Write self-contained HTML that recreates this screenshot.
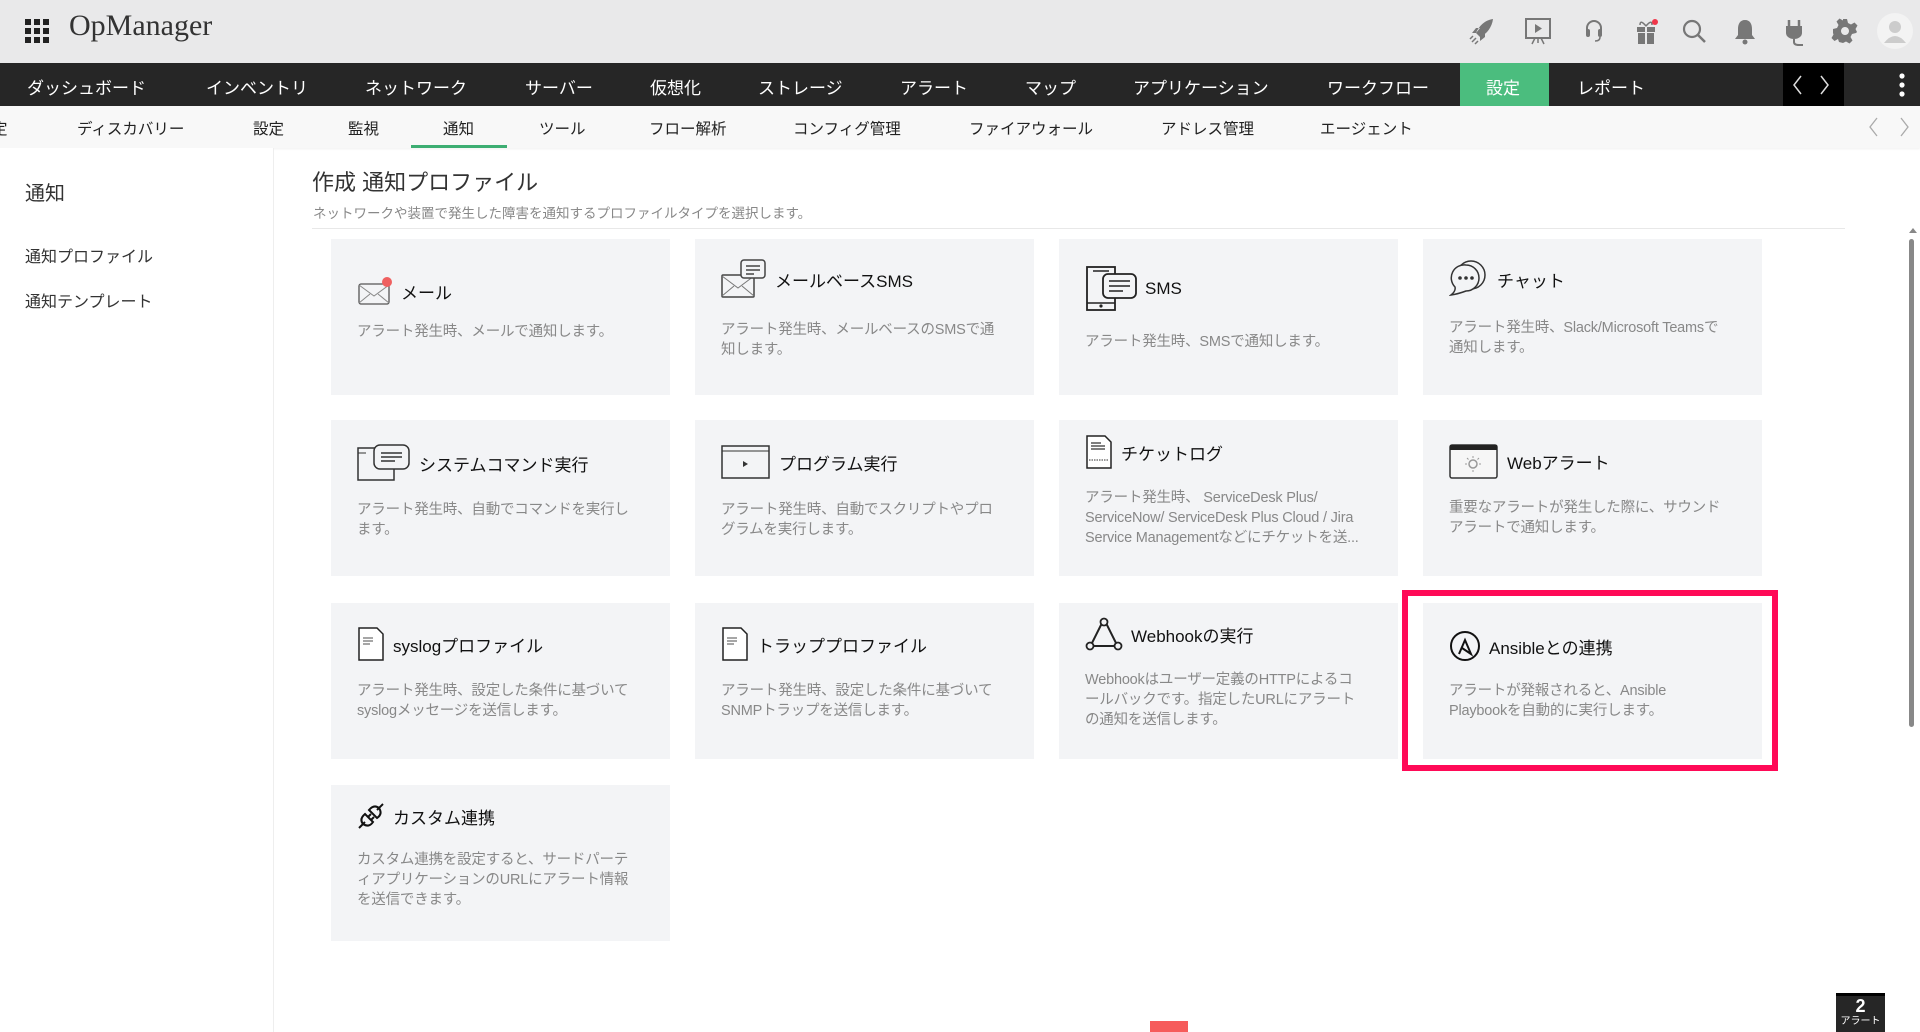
<!DOCTYPE html>
<html><head><meta charset="utf-8">
<style>
*{margin:0;padding:0;box-sizing:border-box}
body{width:1920px;height:1032px;overflow:hidden;background:#fff;font-family:"Liberation Sans","Noto Sans CJK JP",sans-serif;position:relative;color:#222}
.top{position:absolute;left:0;top:0;width:1920px;height:63px;background:#e9e9ea}
.logo{position:absolute;left:69px;top:9px;font-family:"Liberation Serif",serif;font-size:30px;color:#333}
.grid{position:absolute;left:25px;top:19px;width:24px;height:24px}
.grid i{position:absolute;width:6px;height:6px;background:#222}
.ticon{position:absolute;top:16px;width:30px;height:30px}
.nav{position:absolute;left:0;top:63px;width:1920px;height:43px;background:#262626}
.nav span{position:absolute;top:11px;color:#fff;font-size:17px;white-space:nowrap}
.nav .act{position:absolute;left:1460px;top:0;width:89px;height:43px;background:#4bbd7e}
.sub{position:absolute;left:0;top:106px;width:1920px;height:42px;background:#f8f8f8;box-shadow:0 1px 2px rgba(0,0,0,.06)}
.sub span{position:absolute;top:11px;font-size:15.5px;color:#222;white-space:nowrap}
.side{position:absolute;left:0;top:148px;width:274px;height:884px;border-right:1px solid #eee;background:#fff}
.side .h{position:absolute;left:25px;top:29px;font-size:20px;color:#333}
.side .i{position:absolute;left:25px;font-size:16px;color:#333}
.title{position:absolute;left:312px;top:165px;font-size:22px;color:#333}
.subt{position:absolute;left:313px;top:202px;font-size:13.5px;color:#888}
.sep{position:absolute;left:312px;top:228px;width:1533px;height:1px;background:#e8e8e8}
.card{position:absolute;width:339px;height:156px;background:#f3f4f6}
.card .t{position:absolute;left:26px;display:flex;align-items:center;font-size:17px;color:#111;white-space:nowrap}
.card .t svg{margin-right:8px;flex:none}
.card .d{position:absolute;left:26px;font-size:14.5px;line-height:20px;color:#888;white-space:nowrap;letter-spacing:-0.2px}
.hl{position:absolute;left:1402px;top:590px;width:376px;height:181px;border:6px solid #ff0a57}
</style></head><body>
<div class="top">
 <div class="grid"><i style="left:0;top:0"></i><i style="left:9px;top:0"></i><i style="left:18px;top:0"></i><i style="left:0;top:9px"></i><i style="left:9px;top:9px"></i><i style="left:18px;top:9px"></i><i style="left:0;top:18px"></i><i style="left:9px;top:18px"></i><i style="left:18px;top:18px"></i></div>
 <div class="logo">OpManager</div>
 <svg class="ticon" style="left:1467px" viewBox="0 0 30 30"><path d="M26 3 C18 4 12 10 9 17 l4 4 C20 18 25 11 26 3z M9 17 l-4 0 4-5 4 0z M13 21 l0 4 5-4 0-4z" fill="#777"/><path d="M5 26 l4-4 M3 23 l3-3 M8 28 l3-3" stroke="#777" stroke-width="1.5"/></svg>
 <svg class="ticon" style="left:1523px" viewBox="0 0 30 30"><rect x="3" y="3" width="24" height="19" fill="none" stroke="#777" stroke-width="2"/><path d="M12 8 l7 4.5 -7 4.5z" fill="#777"/><path d="M15 22 v5 M9 28 l3-6 M21 28 l-3-6" stroke="#777" stroke-width="1.5"/></svg>
 <svg class="ticon" style="left:1579px" viewBox="0 0 30 30"><path d="M8 16 v-4 a7 7 0 0 1 14 0 v4" fill="none" stroke="#777" stroke-width="2"/><rect x="7" y="13" width="4" height="8" rx="2" fill="#777"/><rect x="19" y="13" width="4" height="8" rx="2" fill="#777"/><path d="M21 21 q0 4 -5 4" fill="none" stroke="#777" stroke-width="1.5"/></svg>
 <svg class="ticon" style="left:1631px" viewBox="0 0 30 30"><rect x="6" y="11" width="18" height="5" fill="#777"/><rect x="7" y="17" width="16" height="11" fill="#777"/><path d="M15 11 v17" stroke="#e9e9ea" stroke-width="2"/><path d="M15 10 q-6 -7 -6 -1 M15 10 q6 -7 6 -1" fill="none" stroke="#777" stroke-width="1.5"/><circle cx="24" cy="6" r="3" fill="#f0364a"/></svg>
 <svg class="ticon" style="left:1679px" viewBox="0 0 30 30"><circle cx="13" cy="13" r="8" fill="none" stroke="#777" stroke-width="2.2"/><path d="M19 19 l7 7" stroke="#777" stroke-width="2.5"/></svg>
 <svg class="ticon" style="left:1730px" viewBox="0 0 30 30"><path d="M15 4 c-5 0 -7 4 -7 9 v6 l-3 4 h20 l-3-4 v-6 c0-5 -2-9 -7-9z" fill="#777"/><circle cx="15" cy="26" r="2.5" fill="#777"/></svg>
 <svg class="ticon" style="left:1780px" viewBox="0 0 30 30"><path d="M9 4 v6 M19 4 v6" stroke="#777" stroke-width="2.5"/><path d="M6 10 h16 v7 a8 6 0 0 1 -16 0z" fill="#777"/><path d="M14 23 v3 q0 3 5 3 h4" fill="none" stroke="#777" stroke-width="2"/></svg>
 <svg class="ticon" style="left:1830px" viewBox="0 0 30 30"><path fill="#777" fill-rule="evenodd" d="M13 3h4l1 4 3 1.5 3.5-2 3 3-2 3.5L27 16l-1 1 -4 1-1.5 3 2 3.5-3 3-3.5-2L13 27l-4-1-1-3-3.5 2-3-3 2-3.5L3 17v-4l4-1 1.5-3-2-3.5 3-3 3.5 2z M15 11a4 4 0 1 0 0.01 0z"/></svg>
 <svg style="position:absolute;left:1877px;top:13px" width="36" height="36" viewBox="0 0 36 36"><circle cx="18" cy="18" r="18" fill="#f3f3f3"/><circle cx="18" cy="14" r="6" fill="#ccc"/><path d="M7 30 q11-14 22 0" fill="#ccc"/></svg>
</div>
<div class="nav">
 <span style="left:27px">ダッシュボード</span><span style="left:206px">インベントリ</span><span style="left:365px">ネットワーク</span><span style="left:525px">サーバー</span><span style="left:650px">仮想化</span><span style="left:758px">ストレージ</span><span style="left:900px">アラート</span><span style="left:1025px">マップ</span><span style="left:1133px">アプリケーション</span><span style="left:1327px">ワークフロー</span>
 <div class="act"></div><span style="left:1486px">設定</span><span style="left:1577px">レポート</span>
 <div style="position:absolute;left:1783px;top:0;width:61px;height:43px;background:#000"></div>
 <svg style="position:absolute;left:1790px;top:11px" width="48" height="22" viewBox="0 0 48 22"><path d="M11 2 l-7 9 7 9 M31 2 l7 9 -7 9" fill="none" stroke="#ddd" stroke-width="1.5"/></svg>
 <svg style="position:absolute;left:1898px;top:10px" width="8" height="24"><circle cx="4" cy="3" r="2.6" fill="#fff"/><circle cx="4" cy="12" r="2.6" fill="#fff"/><circle cx="4" cy="21" r="2.6" fill="#fff"/></svg>
</div>
<div class="sub">
 <span style="left:-8px">定</span><span style="left:77px">ディスカバリー</span><span style="left:253px">設定</span><span style="left:348px">監視</span><span style="left:443px">通知</span><span style="left:539px">ツール</span><span style="left:649px">フロー解析</span><span style="left:793px">コンフィグ管理</span><span style="left:969px">ファイアウォール</span><span style="left:1161px">アドレス管理</span><span style="left:1320px">エージェント</span>
 <div style="position:absolute;left:411px;top:39px;width:96px;height:3px;background:#3dae72"></div>
 <svg style="position:absolute;left:1865px;top:10px" width="50" height="22" viewBox="0 0 50 22"><path d="M12 2 l-7 9 7 9 M36 2 l7 9 -7 9" fill="none" stroke="#aaa" stroke-width="1.3"/></svg>
</div>
<div class="side">
 <div class="h">通知</div>
 <div class="i" style="top:95px">通知プロファイル</div>
 <div class="i" style="top:140px">通知テンプレート</div>
</div>
<div class="title">作成 通知プロファイル</div>
<div class="subt">ネットワークや装置で発生した障害を通知するプロファイルタイプを選択します。</div>
<div class="sep"></div>

<div class="card" style="left:331px;top:239px">
 <div class="t" style="top:37px"><svg width="36" height="30" viewBox="0 0 36 30"><rect x="2" y="8" width="30" height="20" rx="2" fill="none" stroke="#555" stroke-width="1.3"/><path d="M2 9 l15 11 15-11 M2 27 l11-9 M32 27 l-11-9" fill="none" stroke="#888" stroke-width="1"/><circle cx="30" cy="6" r="5" fill="#ef6060"/></svg>メール</div>
 <div class="d" style="top:83px">アラート発生時、メールで通知します。</div>
</div>
<div class="card" style="left:695px;top:239px">
 <div class="t" style="top:20px"><svg width="46" height="40" viewBox="0 0 46 40"><rect x="1" y="16" width="32" height="22" rx="1" fill="#f3f4f6" stroke="#444" stroke-width="1.5"/><path d="M1 17 l16 12 16-12 M1 37 l12-10 M33 37 l-12-10" fill="none" stroke="#777"/><rect x="20" y="1" width="24" height="18" rx="3" fill="#f3f4f6" stroke="#444" stroke-width="1.5"/><path d="M25 7 h14 M25 11 h14 M25 15 h8" stroke="#444" stroke-width="1.5"/></svg>メールベースSMS</div>
 <div class="d" style="top:81px">アラート発生時、メールベースのSMSで通<br>知します。</div>
</div>
<div class="card" style="left:1059px;top:239px">
 <div class="t" style="top:27px"><svg width="52" height="46" viewBox="0 0 52 46"><rect x="2" y="1" width="28" height="43" fill="none" stroke="#222" stroke-width="1.8"/><path d="M2 37 h28 M8 5 h16" stroke="#222" stroke-width="1.5"/><circle cx="16" cy="40" r="1.6" fill="#222"/><rect x="18" y="8" width="33" height="24" rx="5" fill="#f3f4f6" stroke="#222" stroke-width="1.8"/><path d="M24 15 h21 M24 20 h21 M24 25 h14" stroke="#222" stroke-width="1.5"/></svg>SMS</div>
 <div class="d" style="top:93px">アラート発生時、SMSで通知します。</div>
</div>
<div class="card" style="left:1423px;top:239px">
 <div class="t" style="top:20px"><svg width="40" height="40" viewBox="0 0 40 40"><circle cx="22" cy="16" r="14" fill="none" stroke="#333" stroke-width="1.5"/><path d="M17 6 a13 13 0 1 1 0 26 q-8 3 -15 4 q5-4 4-8 a13 13 0 0 1 11-22z" fill="#f3f4f6" stroke="#333" stroke-width="1.5"/><circle cx="11" cy="19" r="1.8" fill="#333"/><circle cx="17" cy="19" r="1.8" fill="#333"/><circle cx="23" cy="19" r="1.8" fill="#333"/></svg>チャット</div>
 <div class="d" style="top:79px">アラート発生時、Slack/Microsoft Teamsで<br>通知します。</div>
</div>
<div class="card" style="left:331px;top:420px">
 <div class="t" style="top:24px"><svg width="54" height="38" viewBox="0 0 54 38"><rect x="1" y="4" width="36" height="32" fill="none" stroke="#333" stroke-width="1.5"/><path d="M1 9 h8" stroke="#333"/><rect x="17" y="1" width="35" height="24" rx="6" fill="#f3f4f6" stroke="#333" stroke-width="1.5"/><path d="M24 9 h21 M24 13 h21 M24 17 h14" stroke="#333" stroke-width="1.4"/></svg>システムコマンド実行</div>
 <div class="d" style="top:80px">アラート発生時、自動でコマンドを実行し<br>ます。</div>
</div>
<div class="card" style="left:695px;top:420px">
 <div class="t" style="top:24px"><svg width="50" height="36" viewBox="0 0 50 36"><rect x="1" y="2" width="47" height="32" fill="none" stroke="#333" stroke-width="1.5"/><path d="M1 7 h47" stroke="#333"/><path d="M22 17 l5 3 -5 3z" fill="#333"/></svg>プログラム実行</div>
 <div class="d" style="top:80px">アラート発生時、自動でスクリプトやプロ<br>グラムを実行します。</div>
</div>
<div class="card" style="left:1059px;top:420px">
 <div class="t" style="top:15px"><svg width="28" height="34" viewBox="0 0 28 34"><path d="M2 1 h18 l6 6 v26 h-24z" fill="#fff" stroke="#222" stroke-width="1.5"/><path d="M6 8 h10 M6 11 h14 M6 14 h14" stroke="#333" stroke-width="1.3"/><path d="M4 25 h20" stroke="#333" stroke-dasharray="1.5 1"/></svg>チケットログ</div>
 <div class="d" style="top:68px">アラート発生時、 ServiceDesk Plus/<br>ServiceNow/ ServiceDesk Plus Cloud / Jira<br>Service Managementなどにチケットを送...</div>
</div>
<div class="card" style="left:1423px;top:420px">
 <div class="t" style="top:22px"><svg width="50" height="38" viewBox="0 0 50 38"><rect x="1" y="3" width="47" height="33" rx="2" fill="#f6f6f6" stroke="#333" stroke-width="1.5"/><rect x="1" y="3" width="47" height="5" fill="#222"/><circle cx="24" cy="22" r="4" fill="none" stroke="#999" stroke-width="1.5"/><path d="M24 14 v2 M24 28 v2 M16 22 h2 M30 22 h2 M18 16 l1.5 1.5 M30 16 l-1.5 1.5" stroke="#999"/></svg>Webアラート</div>
 <div class="d" style="top:78px">重要なアラートが発生した際に、サウンド<br>アラートで通知します。</div>
</div>
<div class="card" style="left:331px;top:603px">
 <div class="t" style="top:24px"><svg width="28" height="34" viewBox="0 0 28 34"><path d="M2 1 h18 l6 6 v26 h-24z" fill="#fff" stroke="#222" stroke-width="1.5"/><path d="M6 11 h10 M6 14 h10 M6 17 h7" stroke="#888" stroke-width="1.5"/></svg>syslogプロファイル</div>
 <div class="d" style="top:78px">アラート発生時、設定した条件に基づいて<br>syslogメッセージを送信します。</div>
</div>
<div class="card" style="left:695px;top:603px">
 <div class="t" style="top:24px"><svg width="28" height="34" viewBox="0 0 28 34"><path d="M2 1 h18 l6 6 v26 h-24z" fill="#fff" stroke="#222" stroke-width="1.5"/><path d="M6 11 h10 M6 14 h10 M6 17 h7" stroke="#888" stroke-width="1.5"/></svg>トラッププロファイル</div>
 <div class="d" style="top:78px">アラート発生時、設定した条件に基づいて<br>SNMPトラップを送信します。</div>
</div>
<div class="card" style="left:1059px;top:603px">
 <div class="t" style="top:14px"><svg width="38" height="34" viewBox="0 0 38 34"><path d="M17 6 l-11 22 M21 6 l11 22 M8 29 h23" fill="none" stroke="#222" stroke-width="2"/><circle cx="19" cy="5" r="3.5" fill="#f3f4f6" stroke="#222" stroke-width="1.8"/><circle cx="5" cy="29" r="3.5" fill="#f3f4f6" stroke="#222" stroke-width="1.8"/><circle cx="33" cy="29" r="3.5" fill="#f3f4f6" stroke="#222" stroke-width="1.8"/></svg>Webhookの実行</div>
 <div class="d" style="top:67px">Webhookはユーザー定義のHTTPによるコ<br>ールバックです。指定したURLにアラート<br>の通知を送信します。</div>
</div>
<div class="card" style="left:1423px;top:603px">
 <div class="t" style="top:27px"><svg width="32" height="32" viewBox="0 0 32 32"><circle cx="16" cy="16" r="14" fill="none" stroke="#111" stroke-width="2"/><path d="M10 24 l6-14 l6 14 l-9-6" fill="none" stroke="#111" stroke-width="2"/></svg>Ansibleとの連携</div>
 <div class="d" style="top:78px">アラートが発報されると、Ansible<br>Playbookを自動的に実行します。</div>
</div>
<div class="hl"></div>
<div class="card" style="left:331px;top:785px">
 <div class="t" style="top:17px"><svg width="28" height="28" viewBox="0 0 28 28"><path d="M2 26 l6-6 M26 2 l-6 6" stroke="#111" stroke-width="2"/><path d="M8 12 l8 8 q-4 6 -10 2 q-4 -5 2 -10z M12 8 l8 8 q6 -4 2 -10 q-5 -4 -10 2z" fill="none" stroke="#111" stroke-width="2"/><path d="M11 15 l3-3 M14 18 l3-3" stroke="#111" stroke-width="2"/></svg>カスタム連携</div>
 <div class="d" style="top:65px">カスタム連携を設定すると、サードパーテ<br>ィアプリケーションのURLにアラート情報<br>を送信できます。</div>
</div>

<div style="position:absolute;left:1909px;top:239px;width:5px;height:488px;background:#888;border-radius:3px"></div>
<div style="position:absolute;left:1909px;top:228px;width:0;height:0;border-left:4px solid transparent;border-right:4px solid transparent;border-bottom:5px solid #888"></div>
<div style="position:absolute;left:1150px;top:1021px;width:38px;height:11px;background:#f65b5b"></div>
<div style="position:absolute;left:1836px;top:993px;width:49px;height:39px;background:#262626;border-top:3px solid #000;color:#fff;text-align:center">
 <div style="font-size:18px;font-weight:bold;line-height:20px">2</div><div style="font-size:10px;line-height:12px">アラート</div></div>
</body></html>
